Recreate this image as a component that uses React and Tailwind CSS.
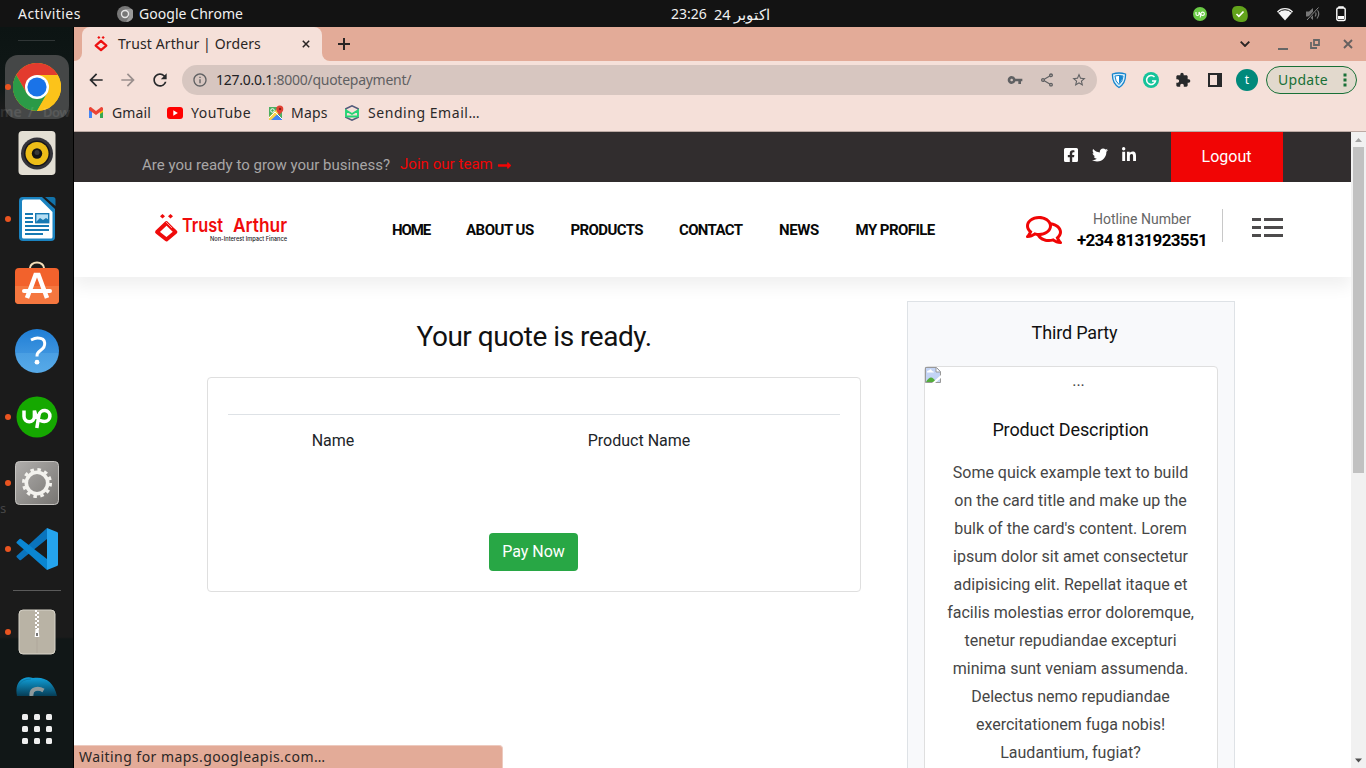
import React from "react";
import { FaFacebookSquare, FaTwitter, FaLinkedinIn, FaLongArrowAltRight, FaRegComments } from "react-icons/fa";
import { MdVpnKey, MdOutlineShare, MdStarBorder, MdExtension, MdRefresh, MdArrowBack, MdArrowForward, MdAdd, MdOutlineInfo } from "react-icons/md";

const UI = "font-['Noto_Sans',sans-serif]";

function TrustMark({ className }) {
  return (
    <svg viewBox="0 0 26 30" className={className}>
      <path d="M13 9 23 18 13 26.500 3 18Z" fill="none" stroke="#ee1111" strokeWidth="4.200" strokeLinejoin="round" />
      <path d="M9 0 12 2.800 9 5.600 6 2.800ZM17 0l3 2.800-3 2.800-3-2.800Z" fill="#ee1111" />
    </svg>
  );
}

function Cross({ className }) {
  return (
    <svg viewBox="0 0 10 10" className={className}>
      <path d="m1 1 8 8M9 1 1 9" fill="none" stroke="currentColor" strokeWidth="1.900" />
    </svg>
  );
}

function TopPanel() {
  return (
    <div className="flex h-[27px] shrink-0 items-center bg-[#131313] text-[14px] leading-5 text-[#f0f0f0]">
      <div className="w-[117px] pl-[18px]"><span className="tracking-[0.45px]">Activities</span></div>
      <svg viewBox="0 0 16 16" className="size-4">
        <circle cx="8" cy="8" r="8" fill="#777" />
        <path d="M8 3h7A8 8 0 0 1 9 16l3.500-6Z" fill="#999" />
        <circle cx="8" cy="8" r="4.200" fill="#e7e7e7" /><circle cx="8" cy="8" r="2.800" fill="#777" />
      </svg>
      <div className="w-[538px] pl-1.5"><span className="tracking-[0.05px]">Google Chrome</span></div>
      <div className="flex w-[522px] gap-[7px] whitespace-nowrap">
        <span className="w-9 text-[14px]">23:26</span>
        <span dir="rtl" className="text-[14.5px]">اکتوبر 24</span>
      </div>
      <div className="flex items-center">
        <svg viewBox="0 0 14 14" className="size-3.5">
          <circle cx="7" cy="7" r="7" fill="#6ac945" />
          <path d="M3 5v2a1.500 1.500 0 0 0 3 0V5c.3 2 1.200 3 2 3.500M7.200 10.500 8 6.500a1.700 1.700 0 1 1 1.700 2C8.500 8.500 7 7 6 5" fill="none" stroke="#fff" strokeWidth="1.100" />
        </svg>
        <svg viewBox="0 0 16 16" className="ml-[25px] size-4">
          <path d="M5 0C9-.5 15 1 15.500 7c1 5-.5 9-5 9C5 16 1 14.500.5 9-.5 4 0 .5 5 0Z" fill="#62a31b" />
          <path d="m4.500 8 2.400 2.300L11.500 5.500" fill="none" stroke="#fff" strokeWidth="1.700" />
        </svg>
        <svg viewBox="0 0 16 14" className="ml-[29px] h-3.5 w-4">
          <path d="M0 4.500A11 11 0 0 1 16 4.500L8 13.500Z" fill="#f4f4f4" />
          <path d="M1.500 5.300A9.500 9.500 0 0 1 14.500 5.300" fill="none" stroke="#131313" strokeWidth="1" />
        </svg>
        <svg viewBox="0 0 16 16" className="ml-3 size-4">
          <path d="M1 5.500h3L8 2v12l-4-3.500H1Z" fill="#777" />
          <path d="M10 5.500q2 2.500 0 5M12 3.500q3.500 4.500 0 9" fill="none" stroke="#777" strokeWidth="1.200" />
          <path d="M2 14 13 2" stroke="#131313" strokeWidth="2.500" /><path d="M2 14 13.500 1.500" stroke="#888" strokeWidth="1" />
        </svg>
        <svg viewBox="0 0 10 16" className="ml-[15px] h-4 w-2.5">
          <path d="M3 2V1h4v1" stroke="#fff" fill="none" strokeWidth="1.400" />
          <rect x=".8" y="2" width="8.400" height="12.500" rx="1.500" fill="none" stroke="#fff" strokeWidth="1.400" />
          <rect x="2" y="10" width="6" height="3" fill="#fff" />
        </svg>
      </div>
    </div>
  );
}

function ChromeIcon() {
  return (
    <svg viewBox="0 0 48 48" className="size-12">
      <circle cx="24" cy="24" r="24" fill="#fbbc05" />
      <path d="M3.200 12A24 24 0 0 1 44.800 12H24L13.600 30Z" fill="#e33b2e" />
      <path d="M3.200 12A24 24 0 0 0 24 48L34.400 30 24 36 13.600 30Z" fill="#2b9a47" />
      <path d="M44.800 12A24 24 0 0 1 24 48L34.400 30 24 12Z" fill="#fcc31a" />
      <circle cx="24" cy="24" r="12" fill="#fff" /><circle cx="24" cy="24" r="9.600" fill="#1a73e8" />
    </svg>
  );
}
function MusicIcon() {
  return (
    <svg viewBox="0 0 48 48" className="size-12">
      <rect x="5.500" y="2" width="37" height="44" rx="4" fill="#e3dfd4" />
      <circle cx="24" cy="24.500" r="16" fill="#34343a" /><circle cx="24" cy="24.500" r="13" fill="#17171b" />
      <circle cx="24" cy="24.500" r="11.500" fill="#edbd18" /><circle cx="24" cy="24.500" r="5.200" fill="#141414" />
      <circle cx="24" cy="23.500" r="2.500" fill="#383838" />
    </svg>
  );
}
function WriterIcon() {
  return (
    <svg viewBox="0 0 48 48" className="size-12">
      <path d="M9.500 2H29L42 14v28q0 4-4 4H10q-4 0-4-4V6q0-4 3.500-4Z" fill="#1a83c0" />
      <path d="M11 4.500h16L39.500 17v25q0 1.500-1.500 1.500H10.500Q9 43.500 9 42V6.500Q9 4.500 11 4.500Z" fill="#fff" />
      <path d="M32 2h8q2.500 0 2.500 2.500V11Z" fill="#1273aa" />
      <path d="M12 19h8M12 23h8M12 27h8M12 31h24M12 35h24M12 39h18" stroke="#1679b3" strokeWidth="2" />
      <rect x="22.700" y="18.700" width="13" height="9" fill="#b5def4" stroke="#1679b3" strokeWidth="1.400" />
      <path d="m23 27 4-4 3 2 3-2 3 2v2Z" fill="#1679b3" />
    </svg>
  );
}
function SoftwareIcon() {
  return (
    <svg viewBox="0 0 48 48" className="size-12">
      <path d="M17 9V7a7 5.500 0 0 1 14 0v2" fill="none" stroke="#f5dfb9" strokeWidth="2" />
      <rect x="2" y="7" width="44" height="36" rx="4" fill="#f2622c" />
      <path d="M2 25h44v14q0 4-4 4H6q-4 0-4-4Z" fill="#f5773f" />
      <path d="m14 37 8.500-23h3L34 37" fill="none" stroke="#fff" strokeWidth="4.500" />
      <path d="M11 30h26" stroke="#fff" strokeWidth="4" strokeLinecap="round" />
    </svg>
  );
}
function HelpIcon() {
  return (
    <svg viewBox="0 0 48 48" className="size-12">
      <defs><linearGradient id="help" x2="0" y2="1"><stop stopColor="#1f7ed6" /><stop offset=".54" stopColor="#3c93de" /><stop offset=".55" stopColor="#4a9fe3" /><stop offset="1" stopColor="#57aae8" /></linearGradient></defs>
      <circle cx="24" cy="24" r="22" fill="url(#help)" />
      <path d="M18 13q4-2 6.500-2c10 0 8 9 3.500 12-4 3-4 4-4 6.500" fill="none" stroke="#fff" strokeWidth="3" />
      <circle cx="24" cy="35.200" r="2.400" fill="#fff" />
    </svg>
  );
}
function UpworkIcon() {
  return (
    <svg viewBox="0 0 48 48" className="size-12">
      <circle cx="24" cy="24" r="20.500" fill="#15a800" />
      <path d="M11 17.500v6a5.200 5.200 0 0 0 10.400 0v-6c1.200 5.500 4.500 11 10 11a5.500 5.500 0 1 0-5.400-6.500L23.800 35" fill="none" stroke="#fff" strokeWidth="3.500" />
    </svg>
  );
}
function SettingsIcon() {
  return (
    <svg viewBox="0 0 48 48" className="size-12">
      <defs><linearGradient id="sg" x1="0" y1="0" x2="1" y2="1"><stop stopColor="#b0aeac" /><stop offset="1" stopColor="#777572" /></linearGradient></defs>
      <rect x="2.500" y="2.500" width="43" height="43" rx="4" fill="url(#sg)" stroke="#c5c3c0" />
      <circle cx="24" cy="24" r="13.500" fill="none" stroke="#f3f2ee" strokeWidth="3" strokeDasharray="3.530 3.539" />
      <circle cx="24" cy="24" r="10.700" fill="none" stroke="#f3f2ee" strokeWidth="3.600" />
    </svg>
  );
}
function CodeIcon() {
  return (
    <svg viewBox="0 0 48 48" className="size-12">
      <path d="M3.500 31 34 3v11L8 35q-.8.600-1.500 0L3.500 32Z" fill="#0a74bd" /><path d="m3.500 17 3-3q.8-.6 1.500 0L34 34v11L3.500 18Z" fill="#0a86d2" />
      <path d="m34 3 10 4q1 .4 1 1.500v31q0 1.100-1 1.500l-10 4Z" fill="#25a4ee" />
    </svg>
  );
}
function ZipIcon() {
  return (
    <svg viewBox="0 0 48 48" className="size-12">
      <rect x="6" y="2" width="36" height="44" rx="4" fill="#b9b3a5" stroke="#d8d4c9" />
      <path d="M24 3v42" stroke="#a8a294" strokeWidth=".6" />
      <path d="M23 2v20" stroke="#fff" strokeWidth="2" strokeDasharray="2 2" /><path d="M25 4v20" stroke="#fff" strokeWidth="2" strokeDasharray="2 2" />
      <path d="M22.500 21h3l.8 8h-4.600Z" fill="#fff" /><rect x="23" y="25" width="2" height="3" fill="#777" />
    </svg>
  );
}

function DockItem({ running, active, children }) {
  return (
    <div className={"my-px ml-[5px] flex h-16 w-16 shrink-0 items-center gap-0.5 rounded-[13px] " + (active ? "bg-[#454747]" : "")}>
      <span className={"size-1.5 rounded-full " + (running ? "bg-[#e95420]" : "")} />
      {children}
    </div>
  );
}

function Dock() {
  return (
    <div className="relative flex w-[74px] shrink-0 flex-col border-r border-black bg-[linear-gradient(#0c1413_0,#101817_60px,#1b1b1b_84px,#1b1b1b_610px,#111717_612px,#111717)]">
      <div className="mx-[18px] mt-[13px] mb-[13px] h-px shrink-0 bg-[#303636]" />
      <DockItem running active><ChromeIcon /></DockItem>
      <DockItem><MusicIcon /></DockItem>
      <DockItem running><WriterIcon /></DockItem>
      <DockItem><SoftwareIcon /></DockItem>
      <DockItem><HelpIcon /></DockItem>
      <DockItem running><UpworkIcon /></DockItem>
      <DockItem running><SettingsIcon /></DockItem>
      <DockItem running><CodeIcon /></DockItem>
      <div className="mr-3 ml-[13px] my-2 h-px shrink-0 bg-[#5a5a5a]" />
      <DockItem running><ZipIcon /></DockItem>
      <div className="flex h-[31px] shrink-0 justify-center overflow-hidden pt-3">
        <svg viewBox="0 0 42 19" className="h-[19px] w-[42px] shrink-0">
          <defs><linearGradient id="sk" x2="0" y2="1"><stop stopColor="#11a2dc" /><stop offset="1" stopColor="#063d56" /></linearGradient></defs>
          <path d="M1 19C-2 5 7-2 17 1 29-1 38 5 41 19Z" fill="url(#sk)" />
          <path d="M2 9Q6 2 15 2" fill="none" stroke="#0b6f9b" strokeWidth=".6" />
          <path d="M15.500 19c-1-8 7-8.500 12-5.500" fill="none" stroke="#8e999c" strokeWidth="4" />
        </svg>
      </div>
      <div className="mx-auto mt-[18px] grid grid-cols-3 gap-1.5">
        {Array.from({ length: 9 }, (_, i) => <span key={i} className="size-1.5 rounded-[1.500px] bg-[#efefef]" />)}
      </div>
      <span className="absolute top-[77px] left-0 flex text-[14px] leading-4 font-semibold whitespace-nowrap text-white/10"><span className="w-7">me</span><span className="w-[15px]">/</span><span className="text-[13px] tracking-[-0.5px]">Dow</span></span>
      <span className="absolute top-[473px] left-0 text-[13px] leading-4 text-white/20">s</span>
    </div>
  );
}

function TabStrip() {
  return (
    <div className="flex h-[34px] shrink-0 bg-[#e3ab98] text-[#2a2524]">
      <div className="w-2 bg-[#f5e0d9]"><div className="h-full rounded-br-lg bg-[#e3ab98]" /></div>
      <div className="flex w-[240px] items-center rounded-t-lg bg-[#f5e0d9] pl-3">
        <TrustMark className="h-4 w-3.5" />
        <span className="w-[182px] pb-px pl-[10px] text-[14px] tracking-[0.13px] whitespace-nowrap">Trust Arthur | Orders</span>
        <Cross className="ml-3 size-2" />
      </div>
      <div className="w-2 bg-[#f5e0d9]"><div className="h-full rounded-bl-lg bg-[#e3ab98]" /></div>
      <div className="flex flex-1 items-center pl-1">
        <svg viewBox="0 0 12 12" className="ml-1 size-3"><path d="M6 0v12M0 6h12" stroke="currentColor" strokeWidth="2" /></svg>
      </div>
      <div className="flex items-center pr-[13px] text-[#66605f]">
        <svg viewBox="0 0 10 6" className="mr-7 h-1.5 w-2.5"><path d="m.7.7 4.300 4.300L9.300.7" fill="none" stroke="#2a2524" strokeWidth="1.900" /></svg>
        <span className="mt-[9px] mr-[22px] h-0.5 w-2.5 bg-[#666]" />
        <svg viewBox="0 0 10 10" className="mr-[23px] size-2.5"><path d="M4 1h5v5H4ZM1 3v6h6" fill="none" stroke="#666" strokeWidth="1.800" /></svg>
        <Cross className="size-2.5" />
      </div>
    </div>
  );
}

function Toolbar() {
  return (
    <div className="flex h-[37px] shrink-0 items-center bg-[#f5e0d9] pt-px text-[#27292b]">
      <div className="flex w-[108px] gap-3 pl-3">
        <MdArrowBack className="size-5" /><MdArrowForward className="size-5 text-[#9a8f8d]" /><MdRefresh className="size-5" />
      </div>
      <div className="flex h-[30px] w-[915px] items-center rounded-full bg-[#d7c6c0] pl-[10px] text-[#5f6062]">
        <MdOutlineInfo className="size-4" />
        <span className="flex-1 pb-0.5 pl-2 text-[14px] tracking-[-0.26px]"><span className="text-[#202124]">127.0.0.1</span>:8000/quotepayment/</span>
        <MdVpnKey className="mr-4 size-4" /><MdOutlineShare className="mr-4 size-4" /><MdStarBorder className="mr-[10px] size-4" />
      </div>
      <svg viewBox="0 0 16 17" className="ml-3.5 h-[17px] w-4">
        <path d="M1.500 2Q8 0 14.500 2 15 11 8 15.500 1 11 1.500 2Z" fill="#d9effb" stroke="#1685cd" strokeWidth="1.300" />
        <path d="M4 4q4-1.200 8 0-.2 5.500-4 8.500-3.800-3-4-8.500Z" fill="#fff" stroke="#1685cd" /><path d="M8 4h3.500q0 5-3.500 7.500Z" fill="#1685cd" />
      </svg>
      <svg viewBox="0 0 16 16" className="ml-4 size-4"><circle cx="8" cy="8" r="8" fill="#15c39a" /><path d="M11.500 5A4.500 4.500 0 1 0 12.500 9H9" fill="none" stroke="#fff" strokeWidth="1.500" /></svg>
      <MdExtension className="ml-4 size-4" />
      <svg viewBox="0 0 14 14" className="ml-[17px] size-3.5"><path d="M1 1h12v12H1Z" fill="none" stroke="currentColor" strokeWidth="2" /><path d="M9 0h5v14H9Z" fill="currentColor" /></svg>
      <span className="ml-3.5 flex size-[22px] items-center justify-center rounded-full bg-[#00897b] pb-px text-[12px] text-white">t</span>
      <span className="ml-2 flex h-7 w-[91px] items-center rounded-full border border-[#187037] bg-[#e2d9cd] pl-[11px] text-[14px] text-[#187037]">
        <span className="w-[60px] pb-0.5 tracking-[0.3px]">Update</span>
        <svg viewBox="0 0 4 14" className="ml-[5px] h-3.5 w-1"><path d="M.5 .5h3v3h-3ZM.5 5.500h3v3h-3ZM.5 10.500h3v3h-3Z" fill="currentColor" /></svg>
      </span>
    </div>
  );
}

function Bookmarks() {
  return (
    <div className="flex h-[34px] shrink-0 items-center border-b border-[#bcaaa4] bg-[#f5e0d9] pb-1 pl-[15px] text-[14px] whitespace-nowrap text-[#2b2929]">
      <svg viewBox="0 0 14 11" className="h-[11px] w-3.5">
        <path d="M0 1.500h3V11H0Z" fill="#4285f4" /><path d="M11 1.500h3V11h-3Z" fill="#34a853" />
        <path d="M11 2h3v3l-3 2Z" fill="#fbbc04" /><path d="M0 1q1.500-2 3 0l4 3 4-3q1.500-2 3 0v2L7 8 0 3Z" fill="#ea4335" />
      </svg>
      <span className="w-16 pl-[9px] tracking-[0.1px]">Gmail</span>
      <svg viewBox="0 0 16 12" className="h-3 w-4"><rect width="16" height="12" rx="3" fill="red" /><path d="m6.300 3.300 4.500 2.700-4.500 2.700Z" fill="#fff" /></svg>
      <span className="w-[85px] pl-2 tracking-[0.5px]">YouTube</span>
      <svg viewBox="0 0 16 16" className="size-4">
        <path d="M1 2h13v13H1Z" fill="#4daf62" /><path d="m1 15 7-7 6 6v1Z" fill="#4285f4" /><path d="M1 12 11 2h3v3L3 15H1Z" fill="#fbd24a" />
        <path d="m1 13 6-6 7 7" fill="none" stroke="#fff" /><circle cx="4.500" cy="5.500" r="1.800" fill="none" stroke="#fff" />
        <path d="M11.500 11c0-3-3.200-3.500-3.200-7a3.500 3.500 0 1 1 7 0c0 3.500-3.800 4-3.800 7Z" fill="#e34133" /><circle cx="12" cy="4" r="1.200" fill="#8c1f17" />
      </svg>
      <span className="w-[60px] pl-[7px] tracking-[0.2px]">Maps</span>
      <svg viewBox="0 0 16 16" className="size-4"><path d="M1.800 5V3.800L8 .8l6.200 3V5M1.800 11.500v.7L8 15.200l6.200-3v-.7" fill="none" stroke="#52597a" strokeWidth="1.500" /><path d="M2 11V5.500L8 9l6-3.500V11q0 .5-.5.500h-11Q2 11.500 2 11Z" fill="#f5e0d9" stroke="#25d575" strokeWidth="1.900" /></svg>
      <span className="pl-2 tracking-[0.55px]">Sending Email…</span>
    </div>
  );
}

function SiteHeader() {
  return (
    <>
      <div className="flex h-[50px] shrink-0 bg-[#312d2e] text-[15px]">
        <div className="w-[258px] pt-[7px] pl-[68px] leading-[52px] tracking-[0.01px] whitespace-nowrap text-[#a8a6a6]">Are you ready to grow your business?</div>
        <div className="flex h-[50px] w-[731px] items-center pt-[15px] pl-[68px] text-[#f00505]">
          <span className="w-[97px] tracking-[0.04px]">Join our team</span><FaLongArrowAltRight className="mt-0.5 size-[15px]" />
        </div>
        <div className="flex w-[108px] items-center gap-[13px] pb-1 text-white">
          <FaFacebookSquare className="size-4" /><FaTwitter className="size-4" /><FaLinkedinIn className="size-4" />
        </div>
        <div className="flex w-28 items-center justify-center bg-[#f10505] pr-px text-[16px] text-white">Logout</div>
      </div>
      <div className="z-10 flex h-[95px] shrink-0 bg-white text-[15px] shadow-[0_10px_15px_rgba(25,25,25,0.06)]">
        <div className="w-[318px] pt-8 pl-20">
          <svg viewBox="0 0 134 31" className="h-[31px] w-[134px] overflow-visible">
            <path d="M12.500 9 21.500 18 12.500 25.500 3 18Z" fill="none" stroke="#ef0b0b" strokeWidth="3.800" strokeLinejoin="round" />
            <path d="m14 7.500 7 7M12 8l6 6" stroke="#fff" strokeWidth=".6" />
            <path d="m8.500 0 2.500 2.300-2.500 2.300L6 2.300ZM16.500 0 19 2.300l-2.500 2.300L14 2.300Z" fill="#ef0b0b" />
            <text x="28" y="18" textLength="41" lengthAdjust="spacingAndGlyphs" className="fill-[#f00b0b] font-['Inter'] text-[19px] font-semibold">Trust</text>
            <text x="79" y="18" textLength="54" lengthAdjust="spacingAndGlyphs" className="fill-[#f00b0b] font-['Inter'] text-[19px] font-semibold">Arthur</text>
            <text x="56" y="26.500" textLength="77" lengthAdjust="spacingAndGlyphs" className="fill-[#222] font-['Inter'] text-[6px] font-medium">Non-Interest Impact Finance</text>
          </svg>
        </div>
        <nav className="flex w-[634px] items-center pt-px font-bold whitespace-nowrap text-[#080808]">
          <span className="w-[74px] tracking-[-1.1px]">HOME</span><span className="w-[104.5px] tracking-[-0.5px]">ABOUT US</span>
          <span className="w-[108.500px] tracking-[-0.6px]">PRODUCTS</span><span className="w-[100px] tracking-[-0.65px]">CONTACT</span>
          <span className="w-[76.500px] tracking-[-0.35px]">NEWS</span><span className="tracking-[-0.55px]">MY PROFILE</span>
        </nav>
        <FaRegComments className="mt-[30px] size-9 text-[#f00505]" />
        <div className="ml-[15px] flex w-[131px] flex-col items-center pt-[26px] whitespace-nowrap">
          <span className="pr-px text-[14px] leading-[22px] text-[#666]">Hotline Number</span>
          <span className="pr-px text-[17px] leading-5 font-bold tracking-[-0.67px] text-black">+234 8131923551</span>
        </div>
        <div className="mt-[27px] ml-3.5 h-[33px] w-px bg-[#c8c8c8]" />
        <svg viewBox="0 0 31 20" className="mt-9 ml-[29px] h-5 w-[31px]"><path d="M0 1.500h9M12 1.500h19M0 9.500h9M12 9.500h19M0 17.500h9M12 17.500h19" stroke="#4d4b4c" strokeWidth="3" /></svg>
      </div>
    </>
  );
}

function QuoteCard() {
  return (
    <div className="ml-[133px] flex w-[654px] flex-col">
      <h1 className="mt-10 h-9 text-center text-[28px] leading-10 tracking-[-0.47px] text-[#111]">Your quote is ready.</h1>
      <div className="mt-6 flex h-[215px] flex-col rounded border border-[#dfdfdf] px-5 pt-9 text-[16px]">
        <div className="flex border-t border-[#dee2e6] pt-[14px] text-center leading-6 text-[#212529]">
          <span className="w-[210px]">Name</span><span className="w-[402px]">Product Name</span>
        </div>
        <button className="mt-20 mr-px h-[38px] w-[89px] self-center rounded bg-[#28a745] text-white">Pay Now</button>
      </div>
    </div>
  );
}

const description = [
  "Some quick example text to build", "on the card title and make up the", "bulk of the card's content. Lorem",
  "ipsum dolor sit amet consectetur", "adipisicing elit. Repellat itaque et", "facilis molestias error doloremque,",
  "tenetur repudiandae excepturi", "minima sunt veniam assumenda.", "Delectus nemo repudiandae",
  "exercitationem fuga nobis!", "Laudantium, fugiat?",
];

function ProductPanel() {
  return (
    <div className="mt-6 ml-[46px] h-[600px] w-[328px] border border-[#dee2e6] bg-[#f8f9fb] px-4 text-center">
      <h2 className="h-16 pt-[19px] pl-[7px] text-[18px] leading-6 tracking-[-0.16px] text-[#111]">Third Party</h2>
      <div className="h-[520px] rounded border border-[#dfdfdf] bg-white">
        <div className="flex h-[51px]">
          <svg viewBox="0 0 16 16" className="size-4">
            <path d="M.5 .5h11l4 4v11H.5Z" fill="#c3d4f5" stroke="#999" /><path d="M11 1v4h4" fill="#fff" stroke="#999" />
            <path d="M2 5q0-2 2-1.500Q6 1 7 4q2 0 2 1.500H2Z" fill="#fff" /><path d="M1 15q5-9 10 0Z" fill="#54ad3b" /><path d="m7 16 9-8v3l-6 5Z" fill="#fff" />
          </svg>
          <span className="flex-1 pr-px text-[16px] leading-[28px] text-[#444]">...</span>
        </div>
        <h2 className="pr-px text-[18px] leading-6 tracking-[-0.12px] text-[#111]">Product Description</h2>
        <div className="pt-[17px] pr-px text-[16px] leading-7 whitespace-nowrap text-[#464646]">
          {description.map((line) => <div key={line}>{line}</div>)}
        </div>
      </div>
    </div>
  );
}

export default function App() {
  return (
    <div className={"flex h-[768px] w-[1366px] flex-col overflow-hidden " + UI}>
      <TopPanel />
      <div className="flex min-h-0 flex-1">
        <Dock />
        <main className="relative flex w-[1292px] flex-col">
          <TabStrip /><Toolbar /><Bookmarks />
          <div className="flex min-h-0 flex-1">
            <div className="flex w-[1277px] flex-col overflow-hidden bg-white font-['Roboto',sans-serif]">
              <SiteHeader />
              <div className="flex min-h-0 flex-1"><QuoteCard /><ProductPanel /></div>
            </div>
            <div className="flex w-[15px] flex-col items-center bg-[#f1f1f1]">
              <svg viewBox="0 0 15 15" className="size-[15px] shrink-0"><path d="m4 10 3.500-4L11 10Z" fill="#a3a3a3" /></svg>
              <div className="h-[326px] w-[11px] bg-[#c1c1c1]" />
              <svg viewBox="0 0 15 15" className="mt-auto size-[15px] shrink-0"><path d="m4 5.500 3.500 4 3.500-4Z" fill="#505050" /></svg>
            </div>
          </div>
          <div className="absolute bottom-0 left-0 z-20 h-[23px] w-[429px] rounded-tr border-t border-r border-[#edcabf] bg-[#e3ab98] pl-[5px] text-[14px] leading-[22px] tracking-[0.45px] text-[#2b2726]">Waiting for maps.googleapis.com…</div>
        </main>
      </div>
    </div>
  );
}
